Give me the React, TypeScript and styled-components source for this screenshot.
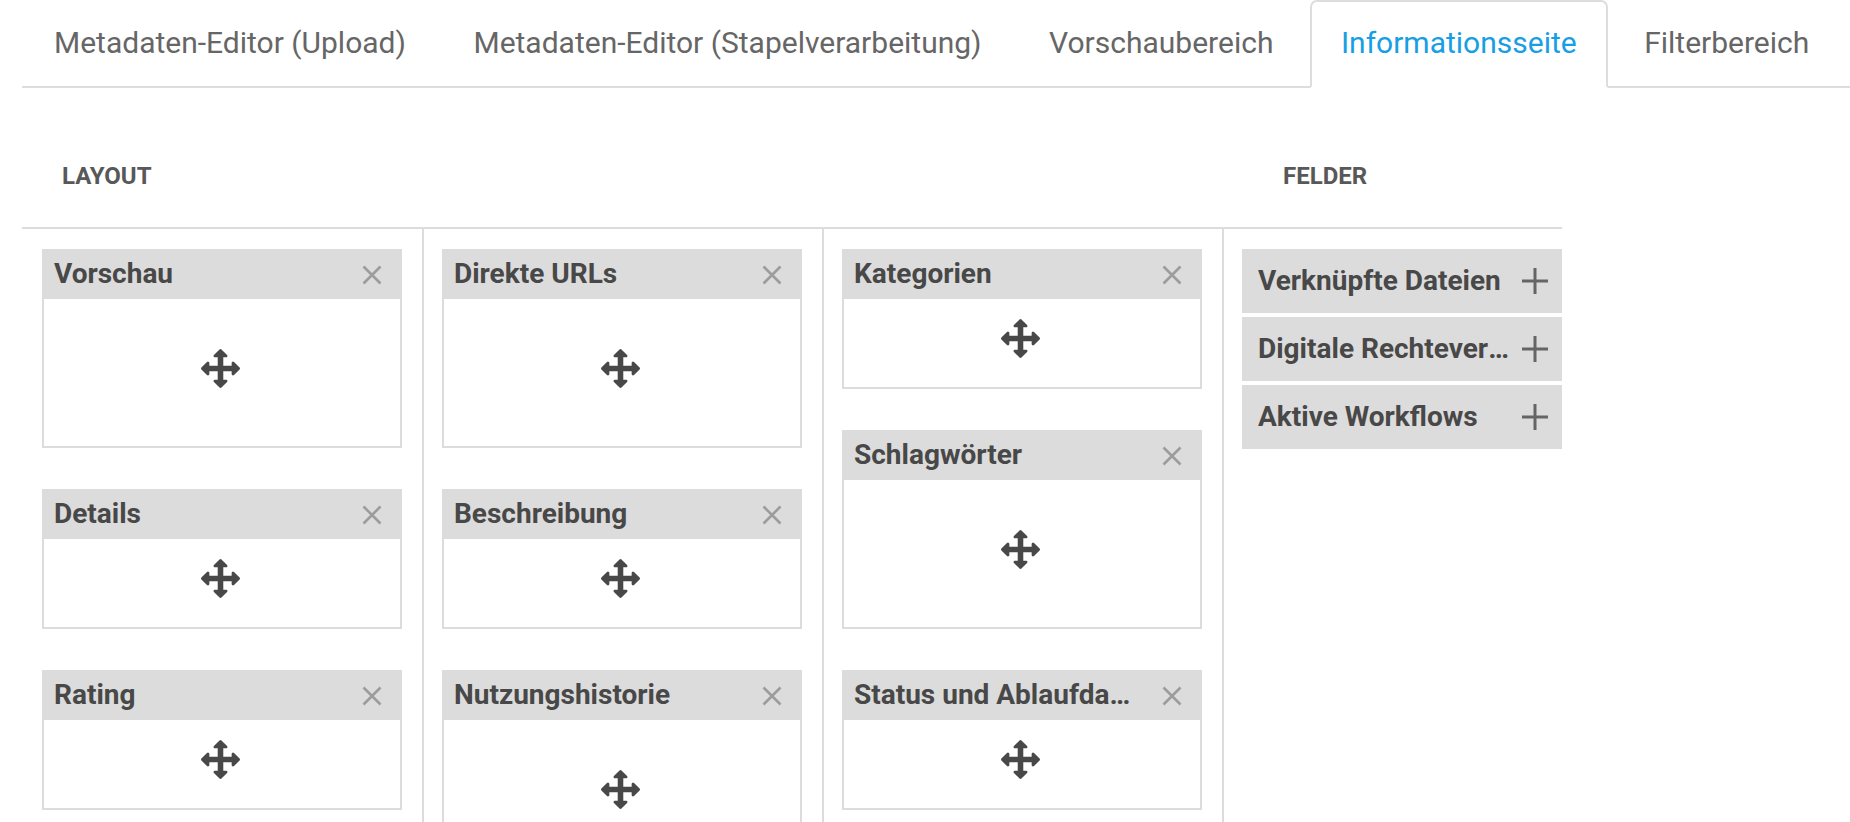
import React from "react";
import styled, { createGlobalStyle } from "styled-components";

const GlobalStyle = createGlobalStyle`
  html, body {
    margin: 0;
    padding: 0;
    background: #ffffff;
    font-family: Roboto, "Noto Sans", "Liberation Sans", sans-serif;
  }
  * { box-sizing: border-box; }
`;

const Page = styled.div`
  width: 1850px;
  overflow: hidden;
`;

const TabBar = styled.nav`
  display: flex;
  margin-left: 22px;
  padding-left: 1px;
  border-bottom: 2px solid #dddddd;
`;

const Tab = styled.div<{ $active?: boolean }>`
  height: 88px;
  margin-bottom: -2px;
  margin-right: 5.5px;
  padding: 0 29px 4px;
  display: flex;
  align-items: center;
  border: 2px solid ${(p) => (p.$active ? "#dddddd" : "transparent")};
  border-bottom-color: transparent;
  border-radius: 7px 7px 0 0;
  background: ${(p) => (p.$active ? "#ffffff" : "transparent")};
  color: ${(p) => (p.$active ? "#179ee3" : "#666666")};
  font-size: 30px;
  font-weight: 400;
  white-space: nowrap;
`;

const Editor = styled.section`
  margin-left: 22px;
  width: 1540px;
`;

const HeadingRow = styled.div`
  display: grid;
  grid-template-columns: 1200px 340px;
  height: 141px;
  border-bottom: 2px solid #dcdcdc;
`;

const Heading = styled.h3<{ $indent: number }>`
  margin: 0;
  padding: 74px 0 0 ${(p) => p.$indent}px;
  font-size: 24px;
  line-height: 28px;
  font-weight: 700;
  color: #585858;
`;

const Columns = styled.div`
  display: grid;
  grid-template-columns: repeat(3, 400px) 340px;
`;

const Column = styled.div<{ $divider?: boolean }>`
  min-height: 620px;
  padding: 20px 20px 0 ${(p) => (p.$divider ? 18 : 20)}px;
  border-left: ${(p) => (p.$divider ? "2px solid #dcdcdc" : "none")};
  display: flex;
  flex-direction: column;
  gap: 41px;
`;

const FieldColumn = styled(Column)`
  gap: 4px;
  padding-right: 0;
`;

const Card = styled.div`
  width: 360px;
  border: 2px solid #dcdcdc;
  background: #ffffff;
`;

const CardHeader = styled.div`
  height: 48px;
  display: flex;
  align-items: center;
  padding: 0 18px 3px 10px;
  background: #dcdcdc;
`;

const Title = styled.span`
  flex: 1;
  min-width: 0;
  overflow: hidden;
  white-space: nowrap;
  text-overflow: ellipsis;
  font-size: 28px;
  font-weight: 700;
  color: #484848;
  padding-right: 30px;
`;

const CloseWrap = styled.span`
  display: inline-flex;
  flex: none;
  margin-top: 3px;
`;

const CardBody = styled.div<{ $tall?: boolean }>`
  height: ${(p) => (p.$tall ? 147 : 88)}px;
  display: flex;
  align-items: center;
  justify-content: center;
  padding: 0 4px 9px 0;
`;

const FieldItem = styled.div`
  width: 320px;
  height: 64px;
  display: flex;
  align-items: center;
  padding: 0 12px 2px 16px;
  background: #dcdcdc;
`;

const FieldTitle = styled.span`
  flex: 1;
  min-width: 0;
  overflow: hidden;
  white-space: nowrap;
  text-overflow: ellipsis;
  font-size: 28px;
  font-weight: 700;
  color: #484848;
  padding-right: 10px;
`;

const PlusWrap = styled.span`
  display: inline-flex;
  flex: none;
  margin-top: 2px;
`;

const CloseIcon = () => (
  <CloseWrap>
    <svg width="20" height="20" viewBox="0 0 20 20">
      <path d="M1.5 1.5L18.5 18.5M18.5 1.5L1.5 18.5" stroke="#9c9c9c" strokeWidth="2.6" strokeLinecap="butt" />
    </svg>
  </CloseWrap>
);

const PlusIcon = () => (
  <PlusWrap>
    <svg width="30" height="28" viewBox="0 0 30 28">
      <path d="M15 1V27M2 14H28" stroke="#656565" strokeWidth="3" />
    </svg>
  </PlusWrap>
);

const MoveIcon = () => (
  <svg width="39" height="39" viewBox="0 0 1792 1792">
    <path
      fill="#484848"
      d="M1792 896q0 26-19 45l-256 256q-19 19-45 19t-45-19-19-45v-128h-384v384h128q26 0 45 19t19 45-19 45l-256 256q-19 19-45 19t-45-19l-256-256q-19-19-19-45t19-45 45-19h128v-384h-384v128q0 26-19 45t-45 19-45-19l-256-256q-19-19-19-45t19-45l256-256q19-19 45-19t45 19 19 45v128h384v-384h-128q-26 0-45-19t-19-45 19-45l256-256q19-19 45-19t45 19l256 256q19 19 19 45t-19 45-45 19h-128v384h384v-128q0-26 19-45t45-19 45 19l256 256q19 19 19 45z"
    />
  </svg>
);

type Widget = { title: string; tall?: boolean };

const layout: Widget[][] = [
  [{ title: "Vorschau", tall: true }, { title: "Details" }, { title: "Rating" }],
  [{ title: "Direkte URLs", tall: true }, { title: "Beschreibung" }, { title: "Nutzungshistorie", tall: true }],
  [{ title: "Kategorien" }, { title: "Schlagwörter", tall: true }, { title: "Status und Ablaufdaten" }],
];

const fields = ["Verknüpfte Dateien", "Digitale Rechteverwaltung", "Aktive Workflows"];

const tabs = [
  "Metadaten-Editor (Upload)",
  "Metadaten-Editor (Stapelverarbeitung)",
  "Vorschaubereich",
  "Informationsseite",
  "Filterbereich",
];

export default function App() {
  return (
    <Page>
      <GlobalStyle />
      <TabBar>
        {tabs.map((t) => (
          <Tab key={t} $active={t === "Informationsseite"}>
            {t}
          </Tab>
        ))}
      </TabBar>
      <Editor>
        <HeadingRow>
          <Heading $indent={40}>LAYOUT</Heading>
          <Heading $indent={61}>FELDER</Heading>
        </HeadingRow>
        <Columns>
          {layout.map((col, i) => (
            <Column key={i} $divider={i > 0}>
              {col.map((w) => (
                <Card key={w.title}>
                  <CardHeader>
                    <Title>{w.title}</Title>
                    <CloseIcon />
                  </CardHeader>
                  <CardBody $tall={w.tall}>
                    <MoveIcon />
                  </CardBody>
                </Card>
              ))}
            </Column>
          ))}
          <FieldColumn $divider>
            {fields.map((f) => (
              <FieldItem key={f}>
                <FieldTitle>{f}</FieldTitle>
                <PlusIcon />
              </FieldItem>
            ))}
          </FieldColumn>
        </Columns>
      </Editor>
    </Page>
  );
}
